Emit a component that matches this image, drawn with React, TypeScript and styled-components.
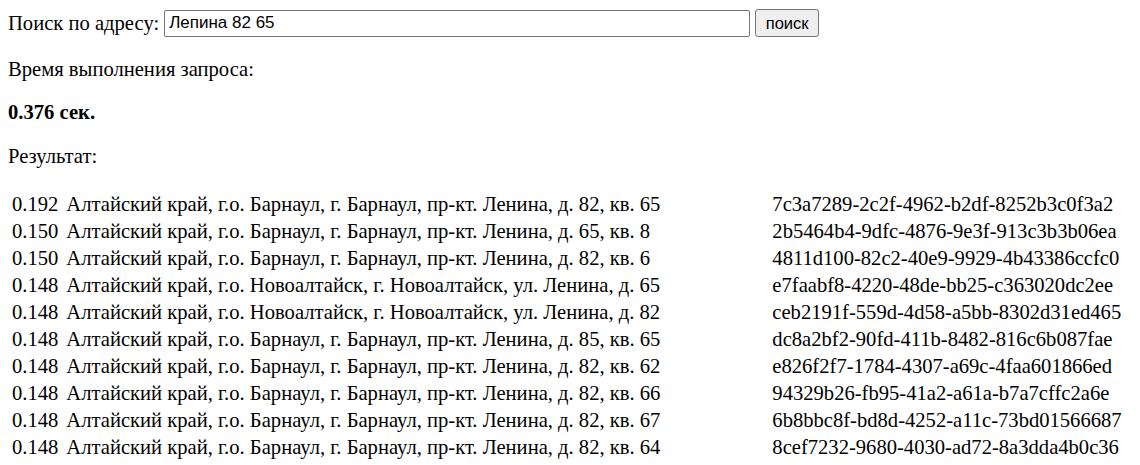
import styled, { createGlobalStyle } from "styled-components";

const GlobalStyle = createGlobalStyle`
  body {
    margin: 8px;
    font-family: "Liberation Serif", "Times New Roman", serif;
    font-size: 20.6px;
    color: #000;
    background: #fff;
  }
`;

const SearchForm = styled.form`
  display: flex;
  align-items: center;
  gap: 5px;
  margin: 0;
  padding-top: 1px;
`;

const SearchInput = styled.input`
  width: 586px;
  height: 27px;
  box-sizing: border-box;
  padding: 1px 4px;
  border: 1px solid #767676;
  border-radius: 2px;
  font-family: "Liberation Sans", Arial, sans-serif;
  font-size: 17px;
  color: #000;
`;

const SearchButton = styled.button`
  width: 64px;
  height: 28px;
  padding: 1px 6px;
  border: 1px solid #767676;
  border-radius: 3px;
  background: #efefef;
  font-family: "Liberation Sans", Arial, sans-serif;
  font-size: 16.5px;
  color: #000;
`;

const Text = styled.p<{ $bold?: boolean }>`
  margin: 20.6px 0;
  font-weight: ${(p) => (p.$bold ? "bold" : "normal")};
`;

const ResultTable = styled.table`
  border-spacing: 2px;
  font-size: 20.6px;
  margin-top: 22px;
`;

const Cell = styled.td<{ $width?: number; $gap?: number }>`
  padding: 1px ${(p) => p.$gap ?? 2}px 1px 2px;
  white-space: nowrap;
  width: ${(p) => (p.$width ? `${p.$width}px` : "auto")};
`;

const rows: [string, string, string][] = [
  ["0.192", "Алтайский край, г.о. Барнаул, г. Барнаул, пр-кт. Ленина, д. 82, кв. 65", "7c3a7289-2c2f-4962-b2df-8252b3c0f3a2"],
  ["0.150", "Алтайский край, г.о. Барнаул, г. Барнаул, пр-кт. Ленина, д. 65, кв. 8", "2b5464b4-9dfc-4876-9e3f-913c3b3b06ea"],
  ["0.150", "Алтайский край, г.о. Барнаул, г. Барнаул, пр-кт. Ленина, д. 82, кв. 6", "4811d100-82c2-40e9-9929-4b43386ccfc0"],
  ["0.148", "Алтайский край, г.о. Новоалтайск, г. Новоалтайск, ул. Ленина, д. 65", "e7faabf8-4220-48de-bb25-c363020dc2ee"],
  ["0.148", "Алтайский край, г.о. Новоалтайск, г. Новоалтайск, ул. Ленина, д. 82", "ceb2191f-559d-4d58-a5bb-8302d31ed465"],
  ["0.148", "Алтайский край, г.о. Барнаул, г. Барнаул, пр-кт. Ленина, д. 85, кв. 65", "dc8a2bf2-90fd-411b-8482-816c6b087fae"],
  ["0.148", "Алтайский край, г.о. Барнаул, г. Барнаул, пр-кт. Ленина, д. 82, кв. 62", "e826f2f7-1784-4307-a69c-4faa601866ed"],
  ["0.148", "Алтайский край, г.о. Барнаул, г. Барнаул, пр-кт. Ленина, д. 82, кв. 66", "94329b26-fb95-41a2-a61a-b7a7cffc2a6e"],
  ["0.148", "Алтайский край, г.о. Барнаул, г. Барнаул, пр-кт. Ленина, д. 82, кв. 67", "6b8bbc8f-bd8d-4252-a11c-73bd01566687"],
  ["0.148", "Алтайский край, г.о. Барнаул, г. Барнаул, пр-кт. Ленина, д. 82, кв. 64", "8cef7232-9680-4030-ad72-8a3dda4b0c36"],
];

export default function App() {
  return (
    <>
      <GlobalStyle />
      <SearchForm onSubmit={(e) => e.preventDefault()}>
        <span>Поиск по адресу:</span>
        <SearchInput defaultValue="Лепина 82 65" />
        <SearchButton type="submit">поиск</SearchButton>
      </SearchForm>
      <Text>Время выполнения запроса:</Text>
      <Text $bold>0.376 сек.</Text>
      <Text>Результат:</Text>
      <ResultTable>
        <tbody>
          {rows.map(([score, address, id]) => (
            <tr key={id}>
              <Cell $gap={4}>{score}</Cell>
              <Cell $width={700}>{address}</Cell>
              <Cell>{id}</Cell>
            </tr>
          ))}
        </tbody>
      </ResultTable>
    </>
  );
}
